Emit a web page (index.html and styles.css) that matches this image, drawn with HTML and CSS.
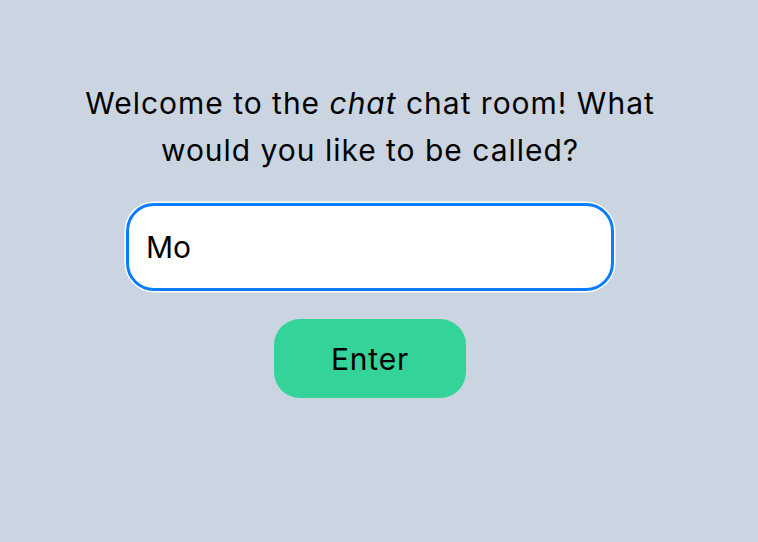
FILE: index.html
```html
<!DOCTYPE html>
<html>
<head>
<meta charset="utf-8">
<link rel="stylesheet" href="styles.css">
</head>
<body>
<main class="page">
  <section class="join">
    <h1 class="prompt">Welcome to the <em>chat</em> chat room! What would you like to be called?</h1>
    <input class="name-input" type="text" value="Mo">
    <button class="enter-btn">Enter</button>
  </section>
</main>
</body>
</html>
```
FILE: styles.css
```css
html, body {
  margin: 0;
  padding: 0;
  background: #cbd5e1;
  font-family: Inter, "Noto Sans", sans-serif;
  color: #000;
}
.page {
  width: 740px;
  padding-top: 80px;
}
.join {
  display: flex;
  flex-direction: column;
  align-items: center;
}
.prompt {
  margin: 0;
  width: 620px;
  text-align: center;
  font-size: 30px;
  line-height: 47px;
  letter-spacing: 0.98px;
  font-weight: 400;
}
.prompt em {
  font-style: italic;
}
.name-input {
  box-sizing: border-box;
  margin-top: 29px;
  width: 488px;
  height: 88px;
  border: 3px solid #0a7cff;
  border-radius: 28px;
  box-shadow: 0 0 0 1.5px #fff;
  outline: none;
  background: #fff;
  padding: 0 17px;
  font-family: Inter, "Noto Sans", sans-serif;
  font-size: 30px;
  color: #000;
}
.enter-btn {
  margin-top: 28px;
  width: 192px;
  height: 79px;
  border: none;
  border-radius: 26px;
  background: #34d399;
  font-family: Inter, "Noto Sans", sans-serif;
  font-size: 30px;
  letter-spacing: 0.8px;
  color: #000;
}
```
